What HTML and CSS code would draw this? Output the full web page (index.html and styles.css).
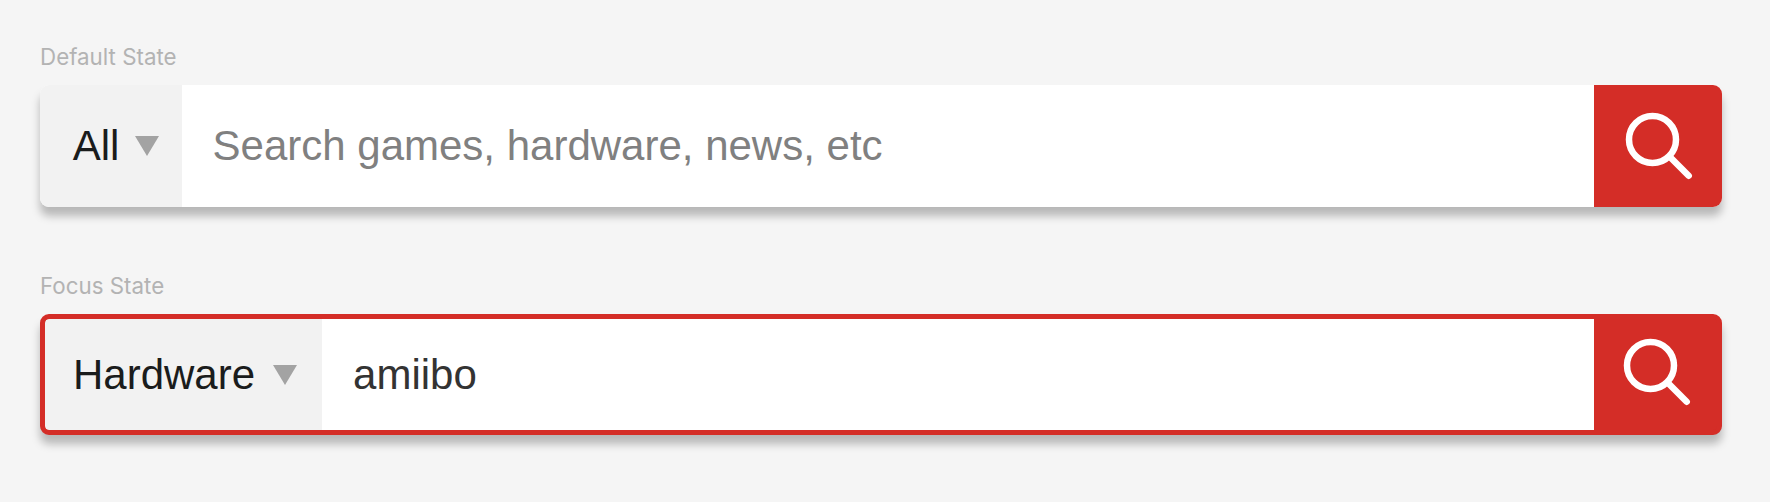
FILE: index.html
```html
<!DOCTYPE html>
<html lang="en">
<head>
<meta charset="utf-8">
<title>Search bar states</title>
<link rel="stylesheet" href="styles.css">
</head>
<body>
<main class="states">
  <section class="state">
    <h2 class="label">Default State</h2>
    <div class="search">
      <div class="category">
        <span>All</span>
        <svg class="caret" viewBox="0 0 24 20"><path d="M0 0h24L12 20z"/></svg>
      </div>
      <div class="field placeholder">Search games, hardware, news, etc</div>
      <div class="submit">
        <svg class="glass" viewBox="0 0 68 68"><circle cx="27.5" cy="27.5" r="23.5"/><path d="M45 45L63.700 63.700"/></svg>
      </div>
    </div>
  </section>
  <section class="state">
    <h2 class="label">Focus State</h2>
    <div class="search focused">
      <div class="category">
        <span>Hardware</span>
        <svg class="caret" viewBox="0 0 24 20"><path d="M0 0h24L12 20z"/></svg>
      </div>
      <div class="field">amiibo</div>
      <div class="submit">
        <svg class="glass" viewBox="0 0 68 68"><circle cx="27.5" cy="27.5" r="23.5"/><path d="M45 45L63.700 63.700"/></svg>
      </div>
    </div>
  </section>
</main>
</body>
</html>
```
FILE: styles.css
```css
* {
  box-sizing: border-box;
}

body {
  margin: 0;
  background: #f5f5f5;
  font-family: "Liberation Sans", Arial, sans-serif;
}

.states {
  display: flex;
  flex-direction: column;
  gap: 65px;
  min-height: 502px;
  padding: 43px 48px 0 40px;
}

.label {
  margin: 0 0 14.3px;
  color: #b3b3b3;
  font: 400 22.35px/28px Inter, sans-serif;
}

.search {
  display: flex;
  height: 121.4px;
  border-radius: 9px;
  overflow: hidden;
  background: #fff;
  box-shadow: 0 9px 9px rgba(0, 0, 0, 0.25);
  font-size: 42px;
  line-height: 48px;
}

.category {
  display: flex;
  align-items: center;
  gap: 15.5px;
  padding: 0 22.7px 0 32.7px;
  background: #f2f2f2;
  color: #1a1c1c;
}

.caret {
  width: 24px;
  height: 20px;
  fill: #a3a3a3;
}

.field {
  flex: 1;
  display: flex;
  align-items: center;
  padding-left: 31px;
  background: #fff;
  color: #333;
}

.placeholder {
  color: #808080;
}

.submit {
  width: 128.5px;
  padding: 26.7px 0 0 31.5px;
  background: #d42d27;
}

.glass {
  display: block;
  width: 68px;
  height: 68px;
  fill: none;
  stroke: #fff;
  stroke-width: 6.5;
  stroke-linecap: round;
}

.focused {
  border: 5px solid #d42d27;
  background: #d42d27;
}

.focused .category {
  gap: 18px;
  padding: 0 25px 0 28px;
  border-radius: 4px 0 0 4px;
}

.focused .submit {
  width: 123.5px;
  padding: 19.1px 0 0 29.2px;
}
```
